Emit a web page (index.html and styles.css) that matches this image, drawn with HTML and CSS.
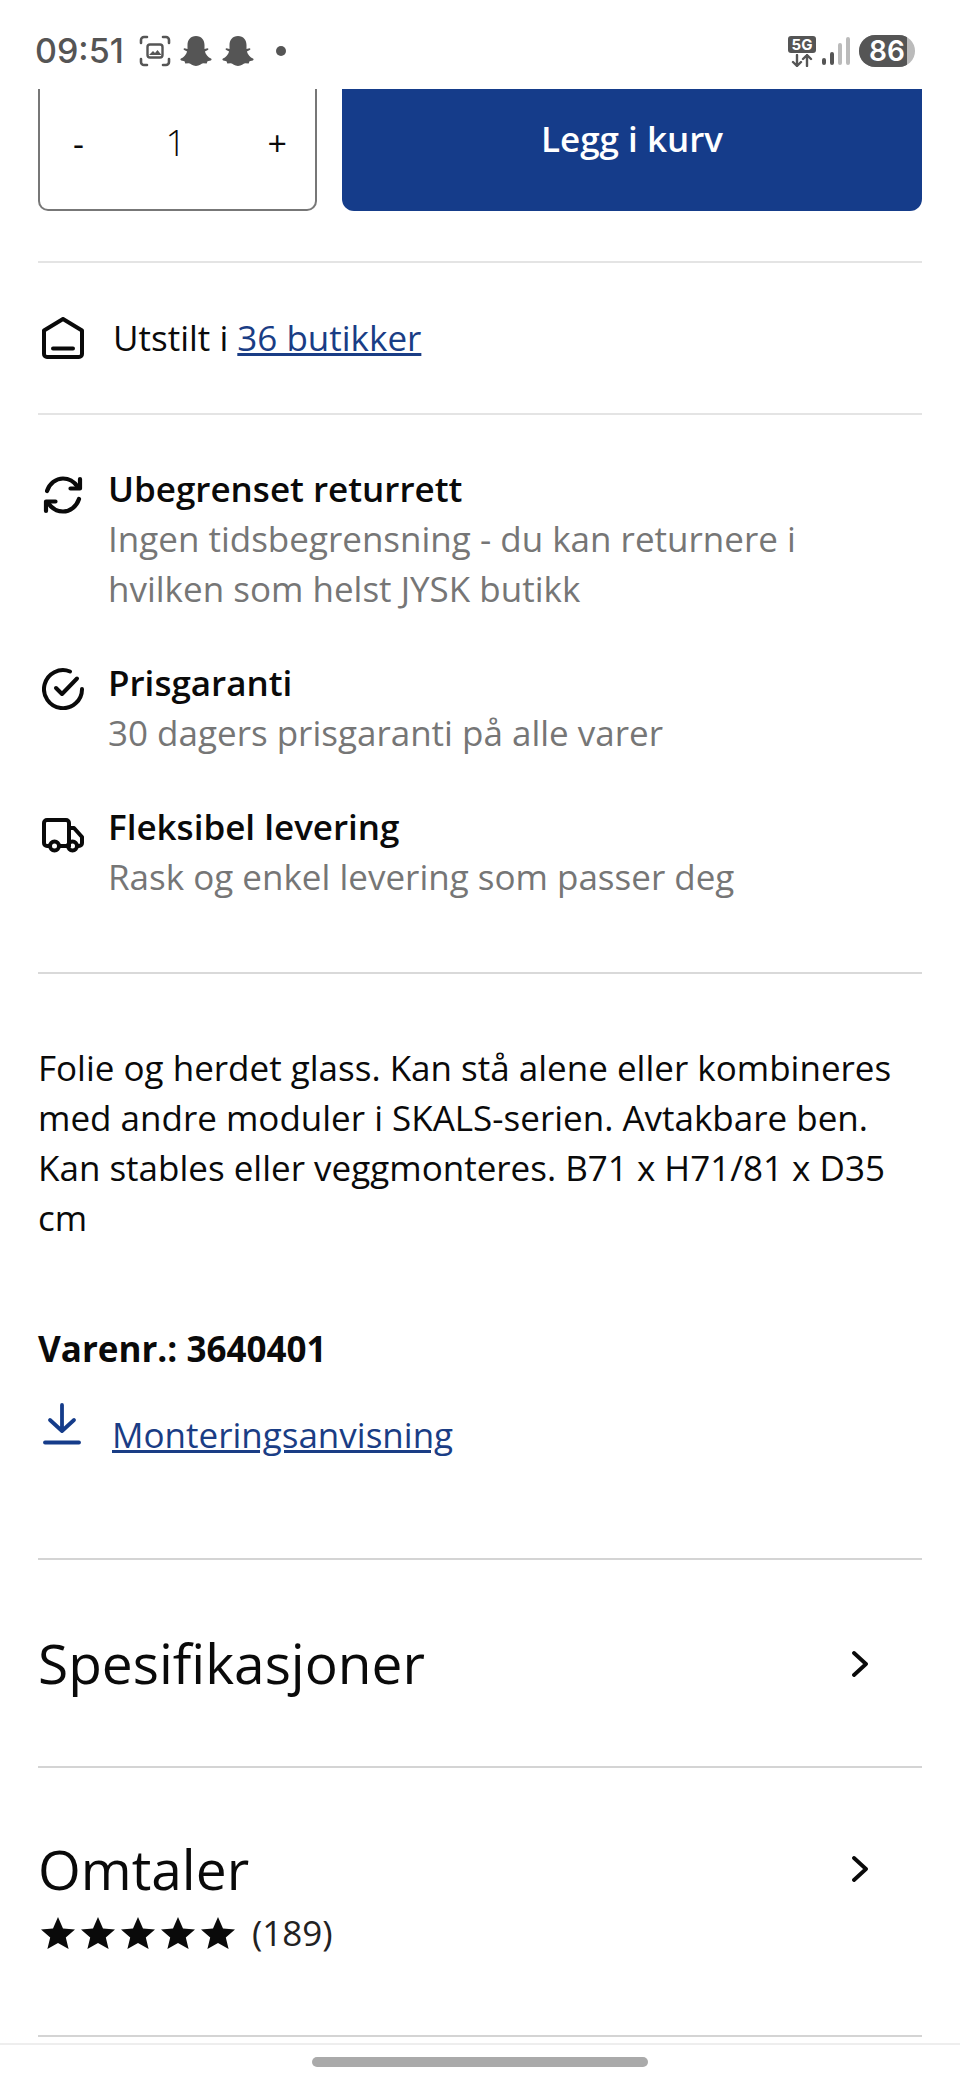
FILE: index.html
```html
<!DOCTYPE html>
<html lang="no">
<head>
    <meta charset="UTF-8">
    <meta name="viewport" content="width=device-width, initial-scale=1.0">
    <title>Produkt</title>
    <link rel="stylesheet" href="styles.css">
</head>
<body>
    <div class="status-bar">
        <div class="status-left">
            <span class="clock">09:51</span>
            <svg class="status-shot" viewBox="0 0 32 32" fill="none" stroke="#555" stroke-width="2.600" stroke-linecap="round">
                <path d="M2 8V5a3 3 0 0 1 3-3h3M24 2h3a3 3 0 0 1 3 3v3M30 24v3a3 3 0 0 1-3 3h-3M8 30H5a3 3 0 0 1-3-3v-3"/>
                <rect x="8.500" y="9.500" width="15" height="13" rx="2.500" stroke-width="2.400"/>
                <path d="M10 20l4-4 2 2 2.500-3 4 5z" fill="#555" stroke="none"/>
            </svg>
            <svg class="ghost" viewBox="0 0 32 30"><path d="M16 0c5.500 0 8.500 4 8.500 9v4l3-.8c1 0 1.300 1.300.3 1.900l-2.900 1.500c.8 3 3.400 6 6.100 7 .9.400.7 1.400-.2 1.800l-3.300.9-.8 2.300-3.600-.3c-1.800.3-3.600 2.700-7.100 2.700s-5.300-2.400-7.100-2.700l-3.600.3-.8-2.300-3.300-.9c-.9-.4-1.100-1.400-.2-1.800 2.700-1 5.300-4 6.100-7L4.200 14.100c-1-.6-.7-1.900.3-1.900l3 .8V9c0-5 3-9 8.500-9z" fill="#555"/></svg>
            <svg class="ghost ghost-two" viewBox="0 0 32 30"><path d="M16 0c5.500 0 8.500 4 8.500 9v4l3-.8c1 0 1.300 1.300.3 1.900l-2.900 1.500c.8 3 3.400 6 6.100 7 .9.400.7 1.400-.2 1.800l-3.300.9-.8 2.300-3.600-.3c-1.800.3-3.600 2.700-7.100 2.700s-5.300-2.400-7.100-2.700l-3.600.3-.8-2.300-3.300-.9c-.9-.4-1.100-1.400-.2-1.800 2.700-1 5.300-4 6.100-7L4.200 14.100c-1-.6-.7-1.900.3-1.900l3 .8V9c0-5 3-9 8.500-9z" fill="#555"/></svg>
            <span class="status-dot"></span>
        </div>
        <div class="status-right">
            <div class="net">
                <span class="net-badge">5G</span>
                <svg class="net-arrows" viewBox="0 0 22 13" fill="none" stroke="#555" stroke-width="2.400" stroke-linecap="round" stroke-linejoin="round">
                    <path d="M6 1v11M2 8l4 4 4-4M16 12V1M12 5l4-4 4 4"/>
                </svg>
            </div>
            <svg class="signal" viewBox="0 0 28 30" stroke-width="4" stroke-linecap="round">
                <path d="M2 24v3M10 18v9" stroke="#555"/>
                <path d="M18 9v18M26 3v24" stroke="#bbb"/>
            </svg>
            <div class="battery"><span class="battery-level">86</span></div>
        </div>
    </div>

    <main class="page">
        <div class="buy-row">
            <div class="stepper">
                <span class="stepper-btn">-</span>
                <span class="stepper-count">1</span>
                <span class="stepper-btn">+</span>
            </div>
            <button class="add-btn">Legg i kurv</button>
        </div>

        <div class="stores">
            <svg class="store-icon" viewBox="0 0 42 42" fill="none" stroke="#0a0a0a" stroke-width="4" stroke-linejoin="round" stroke-linecap="round">
                <path d="M21 2 L40 13.500 V37 a3 3 0 0 1-3 3 H5 a3 3 0 0 1-3-3 V13.500 Z"/>
                <path d="M11 31.500h20"/>
            </svg>
            <span>Utstilt i <a href="#">36 butikker</a></span>
        </div>

        <section class="perks">
            <div class="perk">
                <svg class="perk-icon icon-return" viewBox="0 0 42 42" fill="none" stroke="#0a0a0a" stroke-width="4.200" stroke-linecap="round" stroke-linejoin="round">
                    <path d="M5 17C7.500 9.500 14 4.500 21 4.500c6 0 11 3 14.500 8"/>
                    <path d="M38 5v9.500h-9.500"/>
                    <path d="M37 25c-2.500 7.500-9 12.500-16 12.500-6 0-11-3-14.500-8"/>
                    <path d="M4 37v-9.500h9.500"/>
                </svg>
                <div>
                    <h3>Ubegrenset returrett</h3>
                    <p>Ingen tidsbegrensning - du kan returnere i hvilken som helst JYSK butikk</p>
                </div>
            </div>
            <div class="perk">
                <svg class="perk-icon icon-check" viewBox="0 0 42 42" fill="none" stroke="#0a0a0a" stroke-width="4" stroke-linecap="round" stroke-linejoin="round">
                    <path d="M28 3.500A19 19 0 1 0 40 21"/>
                    <path d="M14 20l6 6L35 10.500"/>
                </svg>
                <div>
                    <h3>Prisgaranti</h3>
                    <p>30 dagers prisgaranti på alle varer</p>
                </div>
            </div>
            <div class="perk">
                <svg class="perk-icon icon-truck" viewBox="0 0 42 42" fill="none" stroke="#0a0a0a" stroke-width="4" stroke-linecap="round" stroke-linejoin="round">
                    <path d="M8 33H5a3 3 0 0 1-3-3V10a3 3 0 0 1 3-3h19a3 3 0 0 1 3 3v23H17"/>
                    <path d="M27 15h5l8 9v6a3 3 0 0 1-3 3h-2M27 33h-1"/>
                    <circle cx="12.500" cy="33" r="4.500"/>
                    <circle cx="30.500" cy="33" r="4.500"/>
                </svg>
                <div>
                    <h3>Fleksibel levering</h3>
                    <p>Rask og enkel levering som passer deg</p>
                </div>
            </div>
        </section>

        <section class="description">
            <p>Folie og herdet glass. Kan stå alene eller kombineres med andre moduler i SKALS-serien. Avtakbare ben. Kan stables eller veggmonteres. B71 x H71/81 x D35 cm</p>
            <div class="sku">Varenr.: 3640401</div>
            <div class="manual">
                <svg class="manual-icon" viewBox="0 0 38 42" fill="none" stroke="#153c8a" stroke-width="3.800" stroke-linecap="round" stroke-linejoin="round">
                    <path d="M19 2v26M7 17l12 11 12-11"/>
                    <path d="M2 39.500h34"/>
                </svg>
                <a href="#">Monteringsanvisning</a>
            </div>
        </section>

        <div class="accordion accordion-spec">
            <h2>Spesifikasjoner</h2>
            <svg class="chevron" viewBox="0 0 16 26" fill="none" stroke="#0a0a0a" stroke-width="3.800" stroke-linecap="round" stroke-linejoin="round"><path d="M2 2l12 11L2 24"/></svg>
        </div>
        <div class="accordion accordion-reviews">
            <div>
                <h2>Omtaler</h2>
                <div class="rating">
                    <div class="stars">
                        <svg viewBox="0 0 34 32"><path d="M17 0l5 11.500 12 1-9.200 8 2.800 11.500L17 26l-10.600 6 2.800-11.500L0 12.500l12-1z"/></svg>
                        <svg viewBox="0 0 34 32"><path d="M17 0l5 11.500 12 1-9.200 8 2.800 11.500L17 26l-10.600 6 2.800-11.500L0 12.500l12-1z"/></svg>
                        <svg viewBox="0 0 34 32"><path d="M17 0l5 11.500 12 1-9.200 8 2.800 11.500L17 26l-10.600 6 2.800-11.500L0 12.500l12-1z"/></svg>
                        <svg viewBox="0 0 34 32"><path d="M17 0l5 11.500 12 1-9.200 8 2.800 11.500L17 26l-10.600 6 2.800-11.500L0 12.500l12-1z"/></svg>
                        <svg viewBox="0 0 34 32"><path d="M17 0l5 11.500 12 1-9.200 8 2.800 11.500L17 26l-10.600 6 2.800-11.500L0 12.500l12-1z"/></svg>
                    </div>
                    <span class="rating-count">(189)</span>
                </div>
            </div>
            <svg class="chevron" viewBox="0 0 16 26" fill="none" stroke="#0a0a0a" stroke-width="3.800" stroke-linecap="round" stroke-linejoin="round"><path d="M2 2l12 11L2 24"/></svg>
        </div>
    </main>

    <div class="nav-bar"><span class="nav-pill"></span></div>
</body>
</html>
```
FILE: styles.css
```css
* {
    box-sizing: border-box;
}
body {
    margin: 0;
    width: 960px;
    height: 2080px;
    overflow: hidden;
    background-color: #fff;
    color: #0a0a0a;
    font-family: "Open Sans", sans-serif;
    font-size: 35px;
    line-height: 50px;
    display: flex;
    flex-direction: column;
}
a {
    color: #1a3d85;
}
h2, h3, p {
    margin: 0;
    font-weight: normal;
}

/* status bar */
.status-bar {
    height: 89px;
    padding: 35px 45px 0 35px;
    display: flex;
    justify-content: space-between;
    align-items: flex-start;
    color: #555;
    flex-shrink: 0;
}
.status-left, .status-right {
    display: flex;
    align-items: center;
    height: 32px;
}
.clock {
    font-family: Inter, sans-serif;
    font-size: 34px;
    font-weight: 500;
    line-height: 32px;
    width: 104px;
}
.status-shot {
    width: 32px;
    height: 32px;
}
.ghost {
    width: 32px;
    height: 30px;
    margin-left: 9px;
}
.ghost-two {
    margin-left: 10px;
}
.status-dot {
    width: 10px;
    height: 10px;
    margin-left: 22px;
    border-radius: 50%;
    background-color: #555;
}
.net {
    width: 28px;
    display: flex;
    flex-direction: column;
    align-items: center;
    gap: 1px;
}
.net-badge {
    width: 28px;
    height: 17px;
    border-radius: 3px;
    background-color: #555;
    color: #fff;
    font-family: Inter, sans-serif;
    font-size: 15px;
    font-weight: 700;
    line-height: 17px;
    text-align: center;
}
.net-arrows {
    width: 22px;
    height: 13px;
}
.signal {
    width: 28px;
    height: 30px;
    margin-left: 6px;
}
.battery {
    width: 56px;
    height: 32px;
    margin-left: 9px;
    border-radius: 16px;
    background-color: #bbb;
    overflow: hidden;
}
.battery-level {
    display: block;
    width: 48px;
    height: 32px;
    padding-left: 8px;
    background-color: #555;
    color: #fff;
    font-family: Inter, sans-serif;
    font-size: 28px;
    font-weight: 600;
    line-height: 32px;
    text-align: center;
}

.page {
    flex: 1;
    padding: 0 38px;
}

/* kjop */
.buy-row {
    display: flex;
    gap: 25px;
    height: 122px;
}
.stepper {
    width: 279px;
    border: 2px solid #777;
    border-top: none;
    border-radius: 0 0 10px 10px;
    padding: 0 28px 12px 33px;
    display: flex;
    justify-content: space-between;
    align-items: center;
}
.stepper-btn {
    font-size: 34px;
}
.stepper-count {
    font-size: 36px;
    font-weight: 300;
}
.add-btn {
    flex: 1;
    border: none;
    border-radius: 0 0 12px 12px;
    background-color: #153c8a;
    color: #fff;
    font-family: "Open Sans", sans-serif;
    font-size: 35px;
    font-weight: 600;
    padding-bottom: 24px;
}

.stores {
    margin-top: 50px;
    height: 154px;
    border-top: 2px solid #e4e4e4;
    border-bottom: 2px solid #e4e4e4;
    display: flex;
    align-items: center;
    gap: 29px;
    padding-left: 4px;
}
.store-icon {
    width: 42px;
    height: 42px;
}

/* fordeler */
.perks {
    padding: 49px 0 70px;
    border-bottom: 2px solid #d9d9d9;
    display: flex;
    flex-direction: column;
    gap: 44px;
}
.perk {
    display: flex;
    gap: 24px;
    padding: 0 40px 0 4px;
}
.perk-icon {
    width: 42px;
    height: 42px;
    flex-shrink: 0;
}
.icon-return {
    margin-top: 10px;
}
.icon-check {
    margin-top: 10px;
}
.icon-truck {
    margin-top: 11px;
}
.perk h3 {
    font-size: 35px;
    font-weight: 600;
}
.perk p {
    color: #767676;
}

.description {
    padding-top: 69px;
}
.sku {
    margin-top: 81px;
    font-weight: 700;
}
.manual {
    margin-top: 36px;
    display: flex;
    align-items: flex-start;
    gap: 31px;
    padding-left: 5px;
}
.manual-icon {
    width: 38px;
    height: 42px;
    margin-top: -7px;
}

/* accordion */
.accordion {
    border-top: 2px solid #d4d4d4;
    display: flex;
    justify-content: space-between;
    align-items: flex-start;
    padding-right: 54px;
}
.accordion h2 {
    font-size: 55px;
    line-height: 76px;
}
.accordion-spec {
    margin-top: 98px;
    height: 208px;
    padding-top: 65px;
}
.accordion-spec .chevron {
    margin-top: 26px;
}
.accordion-reviews {
    height: 271px;
    padding-top: 63px;
    border-bottom: 2px solid #d4d4d4;
}
.chevron {
    width: 16px;
    height: 26px;
    margin-top: 25px;
}
.rating {
    display: flex;
    align-items: center;
    gap: 17px;
    margin-top: 1px;
}
.stars {
    display: flex;
    gap: 6px;
    padding-left: 3px;
}
.stars svg {
    width: 34px;
    height: 32px;
    fill: #0a0a0a;
}
.rating-count {
    color: #222;
}

.nav-bar {
    height: 37px;
    flex-shrink: 0;
    border-top: 2px solid #eee;
    display: flex;
    justify-content: center;
    padding-top: 12px;
}
.nav-pill {
    width: 336px;
    height: 10px;
    border-radius: 5px;
    background-color: #aaa;
}
```
